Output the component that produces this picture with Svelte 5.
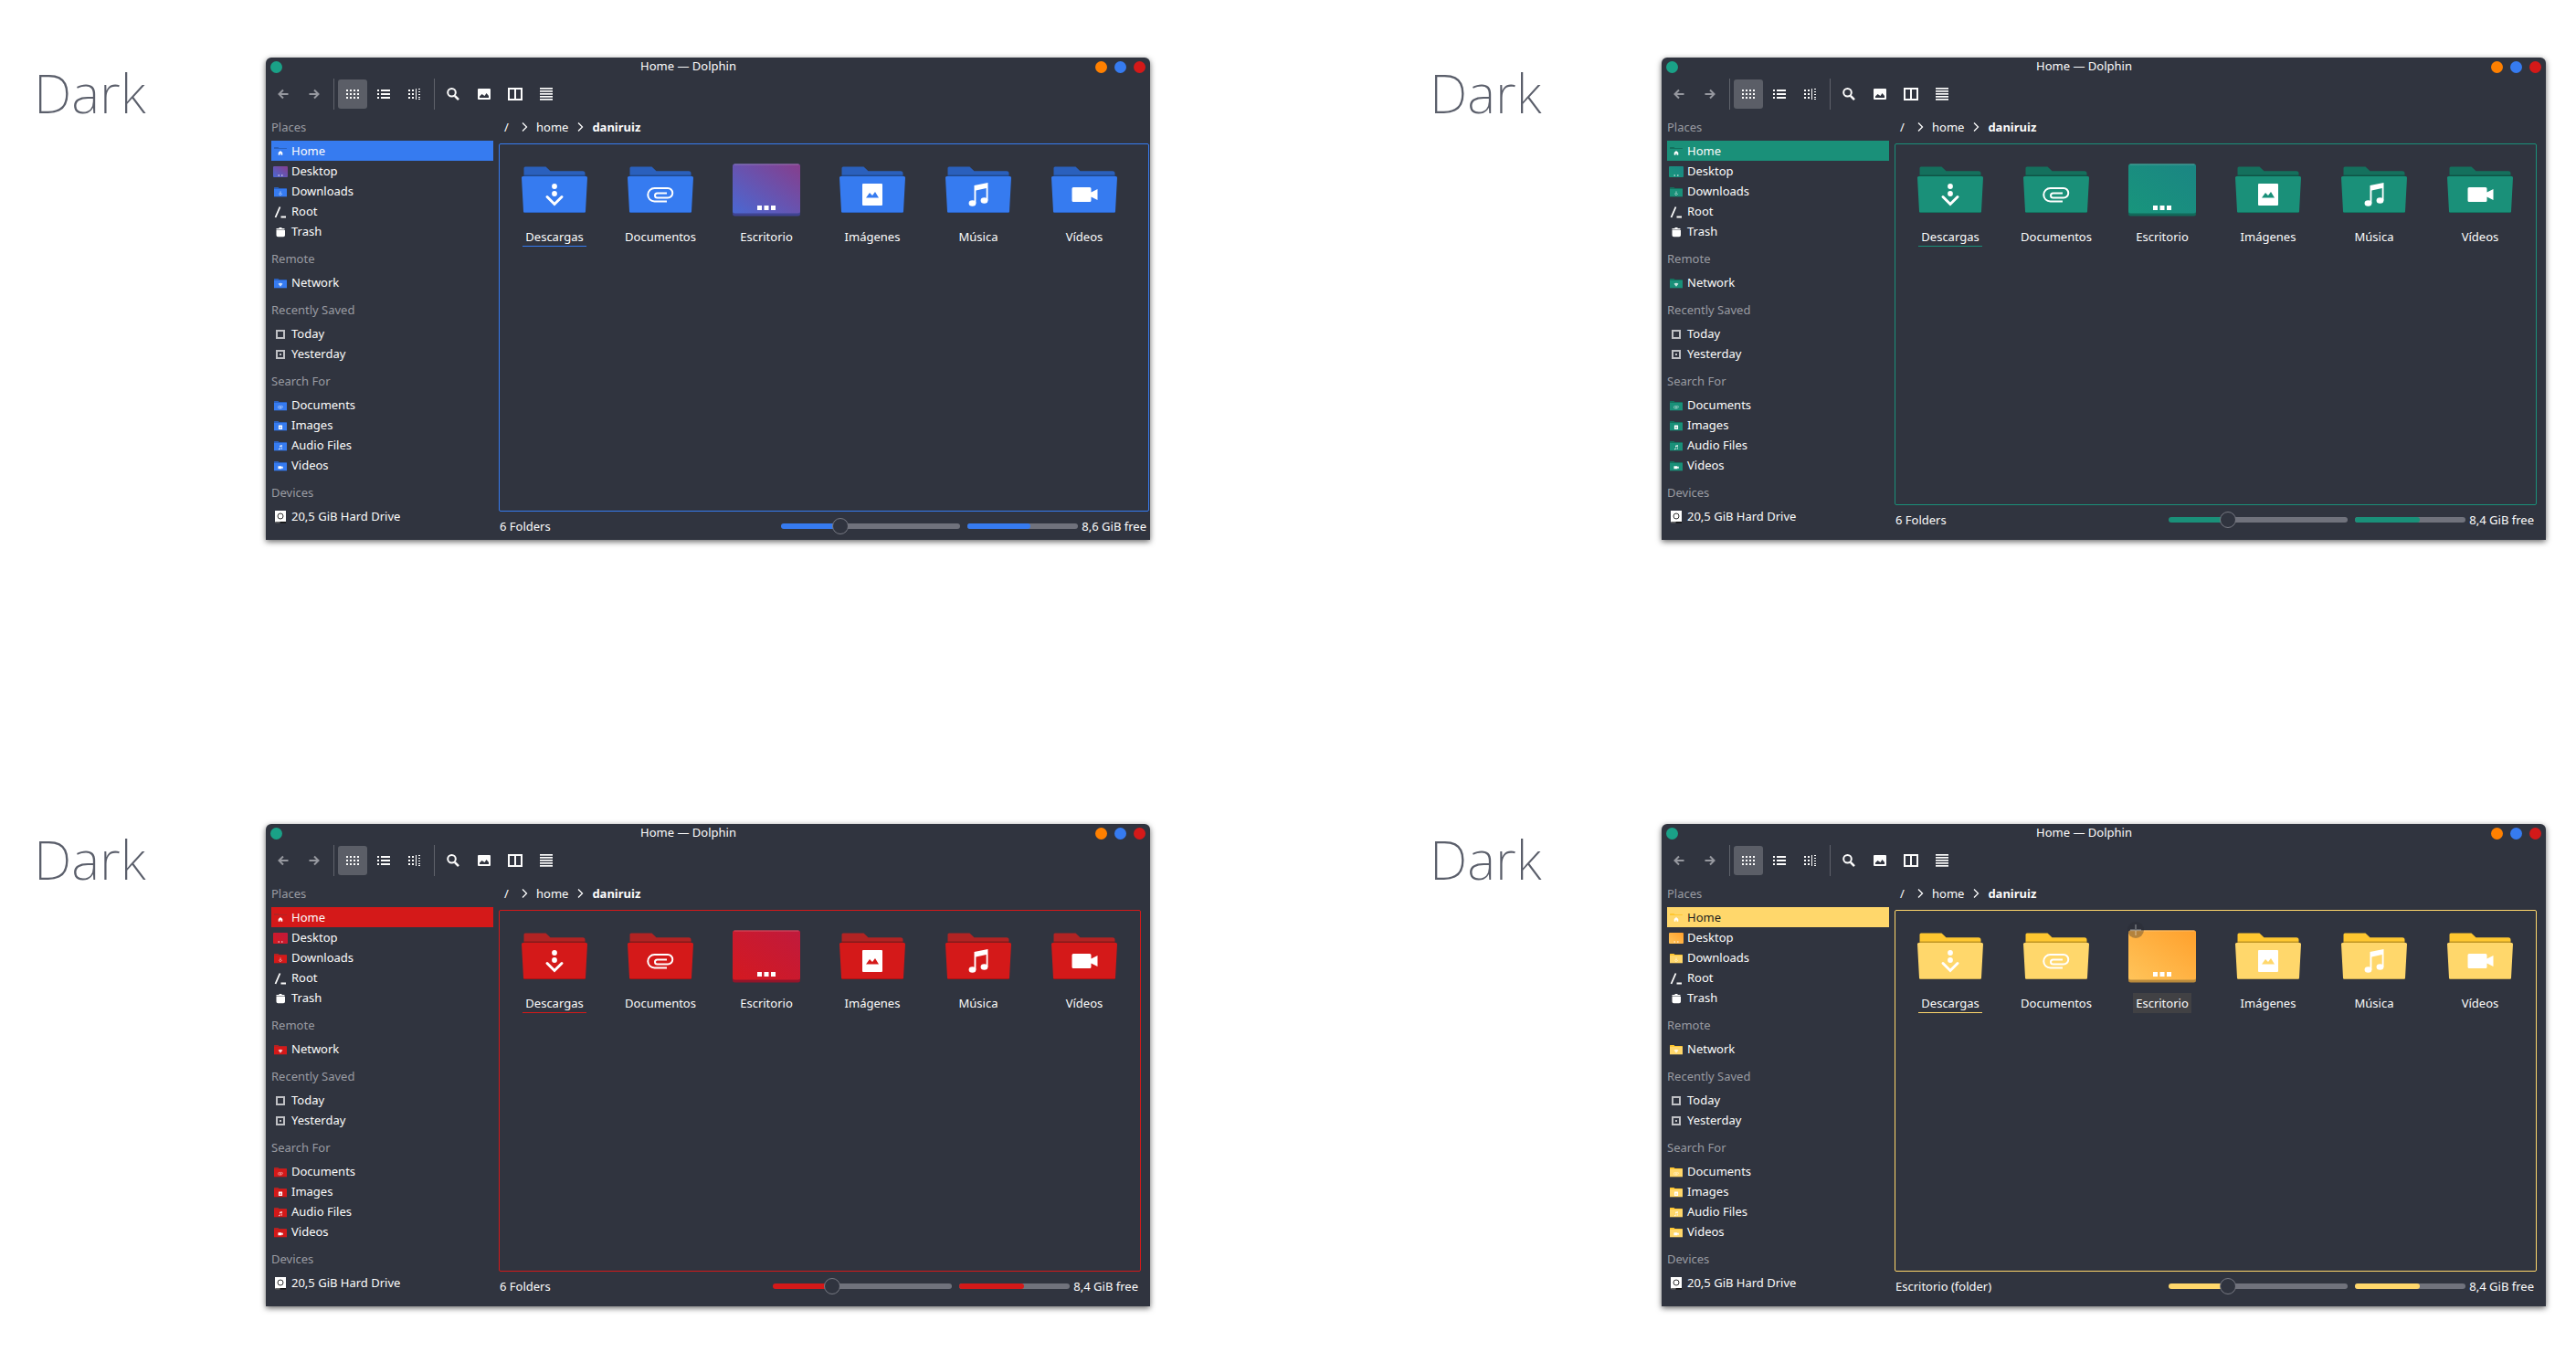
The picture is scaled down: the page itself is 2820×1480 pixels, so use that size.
<script>
  const sections = [
    {
      title: 'Places',
      items: [
        { label: 'Home', icon: 'home', current: true },
        { label: 'Desktop', icon: 'desktop' },
        { label: 'Downloads', icon: 'download' },
        { label: 'Root', icon: 'root' },
        { label: 'Trash', icon: 'trash' },
      ],
    },
    { title: 'Remote', items: [{ label: 'Network', icon: 'network' }] },
    {
      title: 'Recently Saved',
      items: [
        { label: 'Today', icon: 'today' },
        { label: 'Yesterday', icon: 'yesterday' },
      ],
    },
    {
      title: 'Search For',
      items: [
        { label: 'Documents', icon: 'clip' },
        { label: 'Images', icon: 'image' },
        { label: 'Audio Files', icon: 'music' },
        { label: 'Videos', icon: 'video' },
      ],
    },
    { title: 'Devices', items: [{ label: '20,5 GiB Hard Drive', icon: 'drive' }] },
  ];

  const folders = [
    { label: 'Descargas', icon: 'download', focused: true },
    { label: 'Documentos', icon: 'clip' },
    { label: 'Escritorio', icon: 'desktop' },
    { label: 'Imágenes', icon: 'image' },
    { label: 'Música', icon: 'music' },
    { label: 'Vídeos', icon: 'video' },
  ];

  const windows = [
    { theme: 'blue', status: '6 Folders', free: '8,6 GiB free', used: 57, flush: true },
    { theme: 'green', status: '6 Folders', free: '8,4 GiB free', used: 58 },
    { theme: 'red', status: '6 Folders', free: '8,4 GiB free', used: 58 },
    { theme: 'yellow', status: 'Escritorio (folder)', free: '8,4 GiB free', used: 58, hovered: 'Escritorio' },
  ];

  const tools = ['back', 'forward', '|', 'icons', 'compact', 'details', '|', 'search', 'preview', 'split', 'menu'];
  const toolNames = {
    back: 'Back', forward: 'Forward', icons: 'Icons view', compact: 'Compact view', details: 'Details view',
    search: 'Search', preview: 'Show previews', split: 'Split view', menu: 'Menu',
  };
  const zoomMax = 100;
  const zoomValue = 31;
</script>

{#snippet toolIcon(name)}
  <svg class="tool-icon" viewBox="0 0 16 16" aria-hidden="true">
    {#if name === 'back'}
      <path d="M13.5 8H3.5M8 3.5 3.5 8 8 12.5" class="line thick" />
    {:else if name === 'forward'}
      <path d="M2.5 8h10M8 3.5 12.5 8 8 12.5" class="line thick" />
    {:else if name === 'icons'}
      {#each [3, 7, 11] as y}
        {#each [1, 5, 9, 13] as x}<rect {x} {y} width="2" height="2" />{/each}
      {/each}
    {:else if name === 'compact'}
      {#each [3, 7, 11] as y}
        <rect x="1" {y} width="2" height="2" /><rect x="5" {y} width="10" height="2" />
      {/each}
    {:else if name === 'details'}
      {#each [3, 7, 11] as y}
        <rect x="1" {y} width="2" height="2" /><rect x="5" {y} width="2" height="2" />
      {/each}
      <rect x="9" y="2" width="1" height="12" />
      {#each [2, 5, 8, 11, 13] as y}<rect x="12" {y} width="2" height="1" />{/each}
    {:else if name === 'search'}
      <circle cx="6.5" cy="6.2" r="4.3" class="line thick" /><path d="m9.8 9.8 4.2 4.4" class="line heavy" />
    {:else if name === 'preview'}
      <path fill-rule="evenodd" d="M2 2h12a1 1 0 0 1 1 1v10a1 1 0 0 1-1 1H2a1 1 0 0 1-1-1V3a1 1 0 0 1 1-1Zm1 10h10V10L10.500 7 8.500 10 5.500 8 3 10.500Z" />
    {:else if name === 'split'}
      <path fill-rule="evenodd" d="M0 1h16v14H0ZM2 3v10h5V3Zm7 0v10h5V3Z" />
    {:else}
      {#each [1, 4, 7, 10, 13] as y}<rect x="1" {y} width="14" height="1.7" />{/each}
    {/if}
  </svg>
{/snippet}

{#snippet emblem(name)}
  {#if name === 'download'}
    <circle cx="40" cy="36" r="2.900" class="white" /><circle cx="40" cy="44" r="2.900" class="white" />
    <path d="M32 47.500 40 55.500 48 47.500" class="stroke bold" />
  {:else if name === 'clip'}
    <path d="M47 52.500H33.500a7.250 7.250 0 0 1 0-14.500H48a5.250 5.250 0 0 1 0 10.500H36.500a2.500 2.500 0 0 1 0-5H47" class="stroke" />
  {:else if name === 'image'}
    <path fill-rule="evenodd" class="white" d="M30 33h20a1 1 0 0 1 1 1v22a1 1 0 0 1-1 1H30a1 1 0 0 1-1-1V34a1 1 0 0 1 1-1ZM33 48.500H47L43 42 40 46 37 43Z" />
  {:else if name === 'music'}
    <ellipse cx="33.500" cy="54.500" rx="3.900" ry="3.200" class="white" /><ellipse cx="46.500" cy="51.500" rx="3.900" ry="3.200" class="white" />
    <path class="white" d="M35.500 35 50.500 32V51.500H48.700V38L37.400 40.500V54.500H35.500Z" />
  {:else if name === 'video'}
    <path class="white" d="M28 37H46a1.500 1.500 0 0 1 1.500 1.500V42.500L54.500 39V51L47.500 47.500V51.500A1.500 1.500 0 0 1 46 53H28A1.500 1.500 0 0 1 26.500 51.500V38.500A1.500 1.500 0 0 1 28 37Z" />
  {:else if name === 'home'}
    <path class="white" d="M40 31 28 41V55H37V47H43V55H52V41Z" />
  {:else}
    <path class="white" d="M27 40Q40 30 53 40L40 56Z" opacity=".75" />
  {/if}
{/snippet}

{#snippet folderShape()}
  <path class="folder-back" d="M6.500 16a1.500 1.500 0 0 1 1.500-1.500H30.500L35.500 19.300H71a2.500 2.500 0 0 1 2.500 2.500V28H6.500Z" />
  <path class="folder-fold" d="M6.500 23.500H73.500V26H6.500Z" />
  <path class="folder-front" d="M5.500 25H74.500A1.500 1.500 0 0 1 76 26.600L74 63.500A1.500 1.500 0 0 1 72.500 65H7.500A1.500 1.500 0 0 1 6 63.500L4 26.600A1.500 1.500 0 0 1 5.500 25Z" />
  <path class="folder-edge" d="M6.300 64.500H73.700" />
{/snippet}

{#snippet bigIcon(name, theme)}
  <svg class="big-icon" viewBox="0 0 80 80" aria-hidden="true">
    {#if name === 'desktop'}
      <defs>
        <linearGradient id="desk-{theme}" x1="0" y1="1" x2="1" y2="0">
          <stop offset="0" class="from" /><stop offset="1" class="to" />
        </linearGradient>
      </defs>
      <rect x="3" y="11.500" width="74" height="57" rx="2.500" class="desk-base" />
      <rect x="3" y="11.500" width="74" height="54" rx="2.500" fill="url(#desk-{theme})" />
      <path d="M4.500 12H75.500" class="desk-shine" />
      <path class="white" d="M30 57h5v5h-5ZM37.500 57h5v5h-5ZM45 57h5v5h-5Z" />
    {:else}
      <g>{@render folderShape()}</g>
      {@render emblem(name)}
    {/if}
  </svg>
{/snippet}

{#snippet smallIcon(name, theme)}
  <svg class="small-icon" viewBox="0 -1 16 16" aria-hidden="true">
    {#if name === 'root'}
      <path d="M2.500 14 7.500 2.500M8.500 13.500H14" class="line root" />
    {:else if name === 'trash'}
      <path d="M3.500 4h3V3h3v1h3v1.500h-9ZM4 6h9V11.500a1.800 1.800 0 0 1-1.800 1.800H5.300A1.800 1.800 0 0 1 3.500 11.500V6Z" class="white" />
    {:else if name === 'today' || name === 'yesterday'}
      <rect x="4" y="4" width="8" height="8" class="box" />
      {#if name === 'yesterday'}<rect x="7" y="7" width="2" height="2" class="box-dot" />{/if}
    {:else if name === 'drive'}
      <rect x="2" y="1" width="12" height="12.500" class="white" />
      <rect x="2.500" y="13" width="5" height="1.500" class="drive-pin" />
      <rect x="7.500" y="13" width="6.500" height="1.500" class="drive-foot" />
      <circle cx="8" cy="7" r="3" class="drive-disc" />
    {:else if name === 'desktop'}
      <rect x="0" y="2" width="16" height="12" rx="1" fill="url(#desk-{theme})" />
      <path class="white" d="M5.500 11.500h1.500v1H5.500ZM9 11.500h1.500v1H9Z" />
    {:else}
      <path class="folder-back" d="M1 3.500q0-.5.500-.5H5.500l1 1H14.500q.5 0 .5.500V7H1Z" />
      <path class="folder-front" d="M1 5H15V13.300H1Z" />
      <g transform="translate(.4 1.200) scale(.19)">{@render emblem(name)}</g>
    {/if}
  </svg>
{/snippet}

{#snippet chevron()}
  <svg class="chevron" viewBox="0 0 8 12" aria-hidden="true"><path d="M2 1.500 6.500 6 2 10.500" class="line medium" /></svg>
{/snippet}

<main>
  {#each windows as win}
    <section class="sample">
      <h2>Dark</h2>
      <article class="window {win.theme}">
        <header class="titlebar">
          <button class="dot teal" aria-label="Window menu"></button>
          <h1>Home — Dolphin</h1>
          <div class="controls">
            <button class="dot orange" aria-label="Minimize"></button>
            <button class="dot azure" aria-label="Maximize"></button>
            <button class="dot crimson" aria-label="Close"></button>
          </div>
        </header>

        <div class="toolbar">
          {#each tools as tool}
            {#if tool === '|'}
              <span class="separator"></span>
            {:else}
              <button
                class="tool"
                class:active={tool === 'icons'}
                class:dim={tool === 'back' || tool === 'forward'}
                aria-label={toolNames[tool]}
              >
                {@render toolIcon(tool)}
              </button>
            {/if}
          {/each}
        </div>

        <div class="body" class:flush={win.flush}>
          <nav class="places">
            {#each sections as section}
              <h3>{section.title}</h3>
              {#each section.items as item}
                <button class="place" class:current={item.current}>
                  {@render smallIcon(item.icon, win.theme)}
                  {item.label}
                </button>
              {/each}
            {/each}
          </nav>

          <div class="content">
            <div class="crumbs">
              <a href="#/" class="root-crumb">/</a>
              {@render chevron()}
              <a href="#/home">home</a>
              {@render chevron()}
              <a href="#/home/daniruiz" class="here">daniruiz</a>
            </div>

            <div class="view">
              {#each folders as folder}
                <button class="folder" class:focused={folder.focused} class:hovered={win.hovered === folder.label}>
                  {@render bigIcon(folder.icon, win.theme)}
                  <span class="name">{folder.label}</span>
                  {#if win.hovered === folder.label}
                    <svg class="plus" viewBox="0 0 18 18" aria-hidden="true">
                      <circle cx="9" cy="9" r="9" /><path d="M9 3v12M3 9h12" />
                    </svg>
                  {/if}
                </button>
              {/each}
            </div>

            <footer class="status">
              <span class="message">{win.status}</span>
              <input
                type="range"
                aria-label="Zoom"
                min="0"
                max={zoomMax}
                value={zoomValue}
                style="--filled: {(zoomValue / zoomMax) * 100}%"
              />
              <progress aria-label="Disk usage" max="100" value={win.used}></progress>
              <span>{win.free}</span>
            </footer>
          </div>
        </div>
      </article>
    </section>
  {/each}
</main>

<style>
  :global(body) {
    margin: 0;
    background: #fff;
  }

  main {
    display: grid;
    grid-template-columns: 1fr 1fr;
    gap: 311px 306px;
    padding: 63px 33px 50px 37px;
    font-family: 'Noto Sans', 'Open Sans', sans-serif;
    font-size: 13px;
    line-height: 22px;
    color: #fcfcfc;
  }

  .sample {
    display: grid;
    grid-template-columns: 254px 1fr;
    align-items: start;
  }

  h1,
  h2,
  h3 {
    margin: 0;
    font-weight: 400;
  }

  h2 {
    font-size: 59px;
    line-height: 76px;
    font-weight: 200;
    color: #5b5f6b;
  }

  button {
    padding: 0;
    border: 0;
    background: none;
    color: inherit;
    font: inherit;
  }

  svg {
    display: block;
    flex: none;
    fill: currentColor;
  }

  .window {
    display: flex;
    flex-direction: column;
    border-radius: 6px 6px 0 0;
    background: #30343f;
    box-shadow: 0 2px 6px rgba(0, 0, 0, 0.6);
  }

  .blue {
    --accent: #367bf0;
    --back: #2a60bd;
    --from: #4a68d2;
    --to: #863e8c;
    --base: #3f4391;
  }

  .green {
    --accent: #1a9079;
    --back: #14705d;
    --from: #18957c;
    --to: #1b8583;
    --base: #12695a;
  }

  .red {
    --accent: #d41919;
    --back: #b12323;
    --from: #d41920;
    --to: #c01a3c;
    --base: #92152a;
  }

  .yellow {
    --accent: #ffd76b;
    --back: #ffc730;
    --from: #ffc45a;
    --to: #ffa02c;
    --base: #b98a3c;
  }

  .titlebar {
    display: grid;
    grid-template-columns: 17px 1fr 60px;
    align-items: center;
    height: 21px;
    padding: 0 5px 2px;
  }

  .titlebar h1 {
    align-self: start;
    font-size: 13px;
    line-height: 18px;
    text-align: center;
  }

  .controls {
    display: flex;
    justify-content: flex-end;
    gap: 8px;
  }

  .dot {
    width: 13px;
    height: 13px;
    border-radius: 50%;
  }

  .teal {
    background: #1aa187;
  }

  .orange {
    background: #ff8000;
  }

  .azure {
    background: #367bf0;
  }

  .crimson {
    background: #d41919;
  }

  .toolbar {
    display: flex;
    align-items: center;
    gap: 2px;
    height: 34px;
    padding: 0 3px;
  }

  .separator {
    width: 1px;
    height: 34px;
    margin: 0 2px 0 3px;
    background: #5f626b;
  }

  .tool {
    display: grid;
    place-items: center;
    width: 32px;
    height: 32px;
    border-radius: 3px;
  }

  .tool.active {
    background: #5b5e67;
  }

  .tool.dim {
    color: #96989f;
  }

  .tool-icon,
  .small-icon {
    width: 16px;
    height: 16px;
  }

  .line {
    fill: none;
    stroke: currentColor;
    stroke-width: 1;
  }

  .medium {
    stroke-width: 1.3;
  }

  .thick {
    stroke-width: 2;
  }

  .heavy {
    stroke-width: 2.5;
  }

  .root {
    stroke-width: 1.8;
  }

  .body {
    flex: 1;
    display: grid;
    grid-template-columns: 243px 1fr;
    column-gap: 6px;
    padding: 0 10px 0 6px;
  }

  .body.flush {
    padding-right: 1px;
  }

  .places {
    display: flex;
    flex-direction: column;
    padding-bottom: 15px;
  }

  h3 {
    padding: 8px 0 4px;
    font-size: 13px;
    line-height: 22px;
    color: #999ba2;
  }

  .place {
    display: flex;
    align-items: center;
    gap: 4px;
    height: 22px;
    padding-left: 2px;
  }

  .place.current {
    background: var(--accent);
  }

  .yellow .place.current {
    color: #1c1d21;
  }

  .box {
    fill: none;
    stroke: #bfc0c4;
    stroke-width: 2;
  }

  .box-dot {
    fill: #bfc0c4;
  }

  .drive-foot {
    fill: #111;
  }

  .drive-pin {
    fill: #666;
  }

  .drive-disc {
    fill: none;
    stroke: #333;
    stroke-width: 1;
  }

  .content {
    display: flex;
    flex-direction: column;
    min-width: 0;
    padding-bottom: 7px;
  }

  .flush .content {
    padding-bottom: 0;
  }

  .crumbs {
    display: flex;
    align-items: center;
    gap: 9px;
    height: 22px;
    padding: 8px 0 7px 6px;
  }

  .crumbs a {
    color: inherit;
    text-decoration: none;
  }

  .root-crumb {
    width: 9px;
  }

  .here {
    font-weight: 700;
  }

  .chevron {
    width: 8px;
    height: 12px;
  }

  .view {
    flex: 1;
    display: grid;
    grid-template-columns: repeat(auto-fill, 116px);
    align-content: start;
    padding: 10px 2px;
    border: 1px solid var(--accent);
    border-radius: 2px;
  }

  .folder {
    position: relative;
    display: flex;
    flex-direction: column;
    align-items: center;
  }

  .big-icon {
    width: 80px;
    height: 80px;
  }

  .name {
    height: 21px;
    padding: 0 3px;
    border-bottom: 1px solid transparent;
  }

  .focused .name {
    border-bottom-color: var(--accent);
  }

  .hovered .name {
    background: #414144;
  }

  .plus {
    position: absolute;
    top: 2px;
    left: 20px;
    width: 18px;
    height: 18px;
    fill: rgba(40, 42, 48, 0.35);
    stroke: rgba(255, 255, 255, 0.25);
    stroke-width: 2;
  }

  .plus circle {
    stroke: none;
  }

  .white {
    fill: #fff;
  }

  .stroke {
    fill: none;
    stroke: #fff;
    stroke-width: 2;
  }

  .bold {
    stroke-width: 3;
    stroke-linecap: round;
  }

  .folder-back {
    fill: var(--back);
  }

  .folder-front {
    fill: var(--accent);
  }

  .folder-fold {
    fill: rgba(0, 0, 0, 0.25);
  }

  .folder-edge {
    fill: none;
    stroke: rgba(0, 0, 0, 0.2);
  }

  .from {
    stop-color: var(--from);
  }

  .to {
    stop-color: var(--to);
  }

  .desk-base {
    fill: var(--base);
  }

  .desk-shine {
    fill: none;
    stroke: rgba(255, 255, 255, 0.25);
  }

  .status {
    display: flex;
    align-items: center;
    height: 30px;
    padding: 1px 3px 0 1px;
  }

  .message {
    flex: 1;
  }

  input {
    appearance: none;
    width: 196px;
    height: 18px;
    margin: 0 8px 0 0;
    background: none;
  }

  input::-webkit-slider-runnable-track {
    height: 6px;
    border-radius: 3px;
    background: linear-gradient(to right, var(--accent) var(--filled), #70727c var(--filled));
  }

  input::-webkit-slider-thumb {
    appearance: none;
    box-sizing: border-box;
    width: 18px;
    height: 18px;
    margin-top: -6px;
    border: 1px solid #777983;
    border-radius: 50%;
    background: #30343f;
  }

  progress {
    appearance: none;
    width: 121px;
    height: 6px;
    margin-right: 4px;
    border: 0;
    border-radius: 3px;
    overflow: hidden;
    background: #70727c;
  }

  progress::-webkit-progress-bar {
    background: #70727c;
  }

  progress::-webkit-progress-value {
    border-radius: 0 3px 3px 0;
    background: var(--accent);
  }
</style>
